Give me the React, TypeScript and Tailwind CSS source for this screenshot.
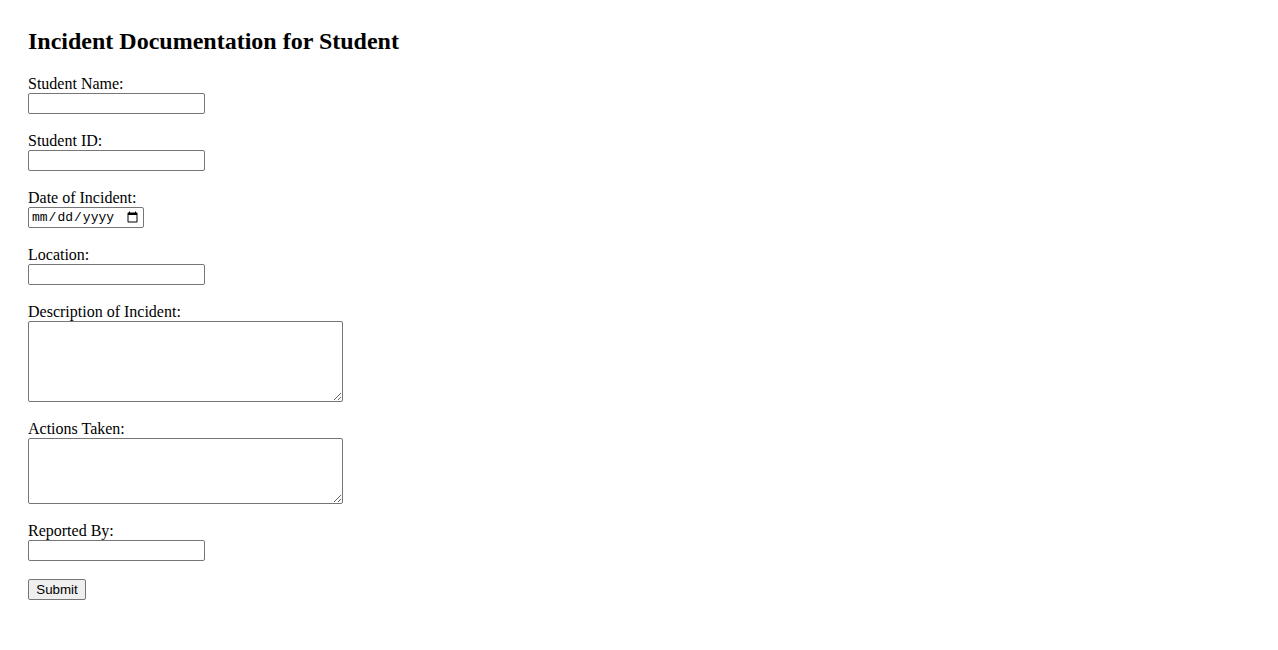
import React from "react";

const fields = [
  { label: "Student Name:", kind: "text" },
  { label: "Student ID:", kind: "text" },
  { label: "Date of Incident:", kind: "date" },
  { label: "Location:", kind: "text" },
  { label: "Description of Incident:", kind: "area", h: "h-[81px]" },
  { label: "Actions Taken:", kind: "area", h: "h-[66px]" },
  { label: "Reported By:", kind: "text" },
];

export default function App() {
  return (
    <div className="min-h-screen bg-white px-[28px] pt-[27px] text-black font-['Liberation_Serif',serif]">
      <h2 className="text-[24px] leading-[28px] font-bold mb-[20px]">
        Incident Documentation for Student
      </h2>

      <form className="flex flex-col items-start" onSubmit={(e) => e.preventDefault()}>
        {fields.map((f) => (
          <div key={f.label} className="flex flex-col items-start mb-[18px]">
            <label className="text-[16px] leading-[18px]">{f.label}</label>
            {f.kind === "text" && (
              <input
                type="text"
                className="w-[177px] h-[21px] border border-[#767676] rounded-[2px] bg-white px-[2px] text-[13px] font-['Liberation_Sans',sans-serif]"
              />
            )}
            {f.kind === "date" && (
              <input
                type="date"
                className="w-[116px] h-[21px] border border-[#767676] rounded-[2px] bg-white px-[2px] text-[13px] font-['Liberation_Mono',monospace]"
              />
            )}
            {f.kind === "area" && (
              <textarea
                className={`w-[315px] ${f.h} border border-[#767676] rounded-[2px] bg-white p-[2px] text-[13px] font-['Liberation_Mono',monospace] resize`}
              />
            )}
          </div>
        ))}

        <button
          type="submit"
          className="h-[21px] w-[58px] border border-[#767676] rounded-[2px] bg-[#efefef] text-[13.33px] leading-[17px] font-['Liberation_Sans',sans-serif]"
        >
          Submit
        </button>
      </form>
    </div>
  );
}
